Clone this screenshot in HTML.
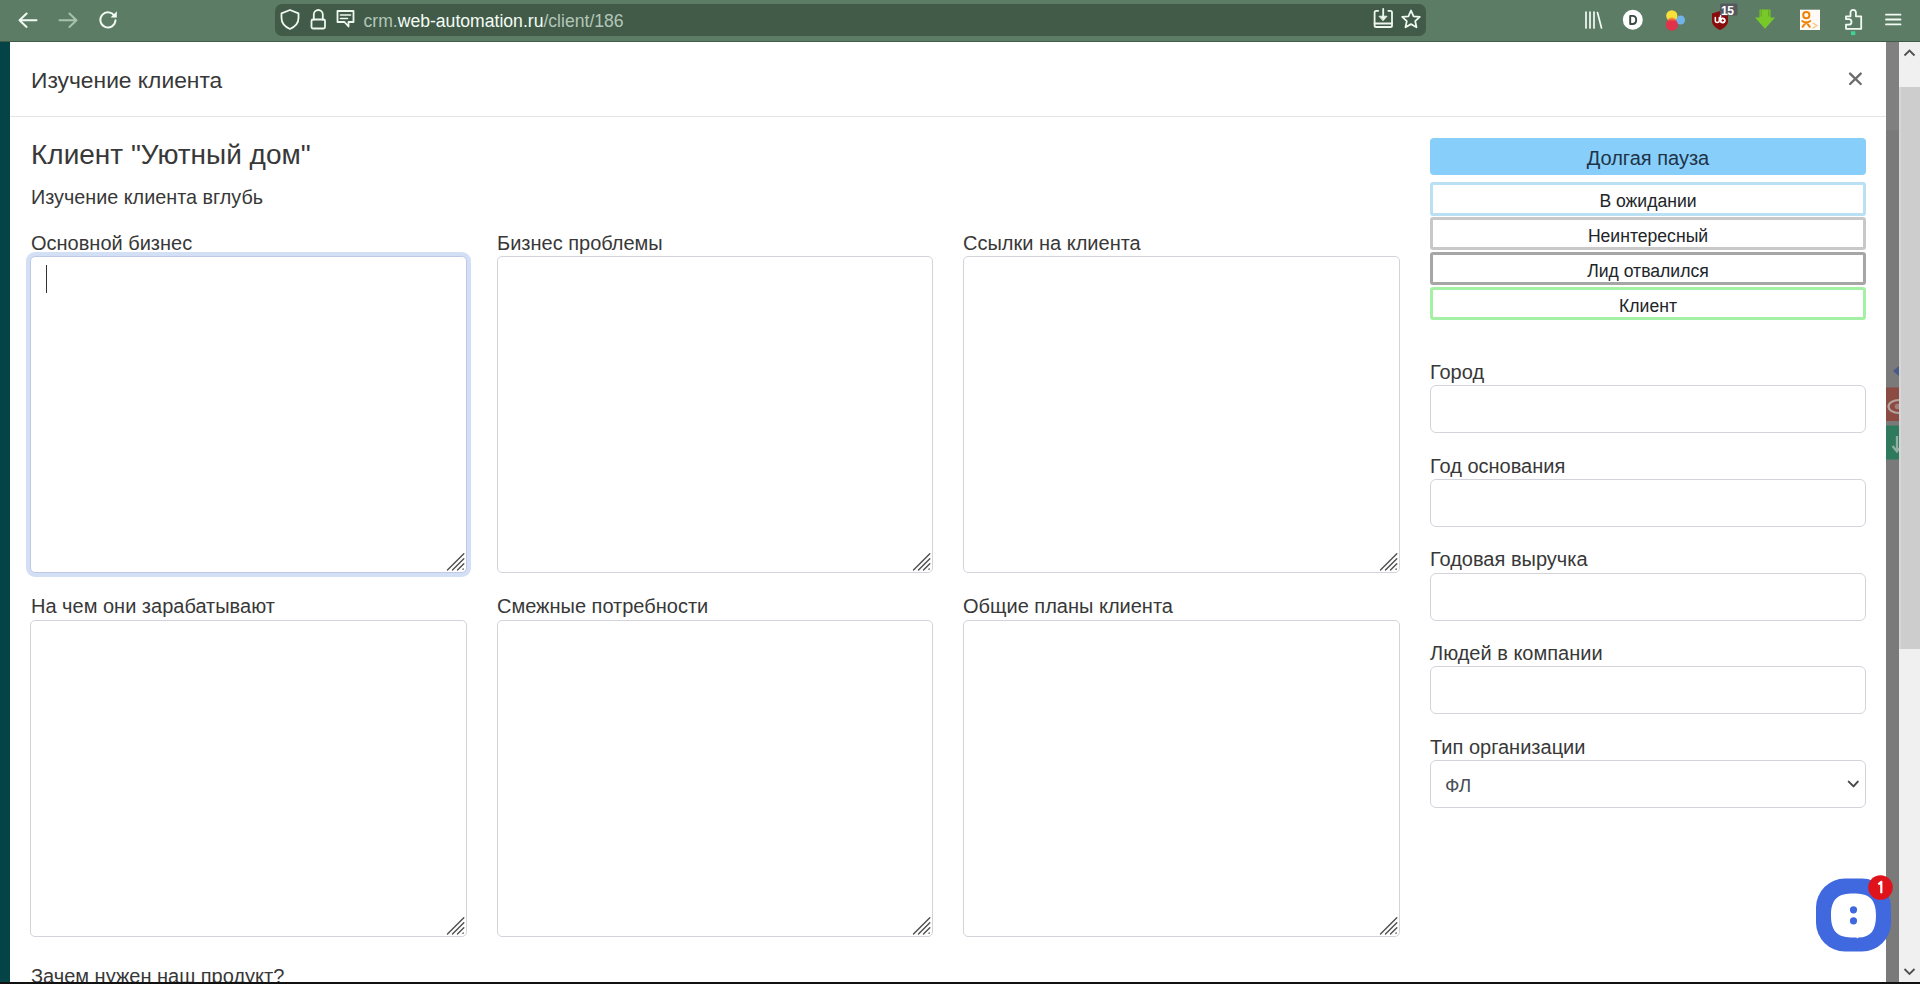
<!DOCTYPE html>
<html><head><meta charset="utf-8">
<style>
*{box-sizing:border-box;margin:0;padding:0}
html,body{width:1920px;height:984px;overflow:hidden;background:#fff;font-family:"Liberation Sans",sans-serif;color:#383838}
.a{position:absolute}
#tb{left:0;top:0;width:1920px;height:42px;background:#5c7c66;border-bottom:1px solid #3f5a47}
#url{left:275px;top:3.5px;width:1151px;height:32px;background:#425b49;border-radius:7px}
#urltxt{left:363.5px;top:10.5px;font-size:17.6px;line-height:20px;white-space:nowrap;color:#b3c6b8}
#urltxt b{font-weight:normal;color:#f4fbf5}
#strip{left:0;top:42px;width:10px;height:940px;background:#044446}
#modal{left:10px;top:42px;width:1876px;height:940px;background:#fff}
#gray{left:1886px;top:42px;width:13px;height:940px;background:linear-gradient(#808080 0,#808080 88px,#7a7a7a 88px)}
#sb{left:1899px;top:42px;width:21px;height:940px;background:#f0f0f0}
#thumb{left:1899px;top:87px;width:21px;height:562px;background:#cdcdcd;border-left:2px solid #d6d6d6}
#blk{left:0;top:982px;width:1920px;height:2px;background:#111}
#hdrline{left:10px;top:116px;width:1876px;height:1px;background:#e5e5e5}
.t{position:absolute;white-space:nowrap;line-height:1}
.ta{position:absolute;border:1px solid #d4d3db;border-radius:5px;background:#fff}
.inp{position:absolute;left:1430px;width:436px;height:48px;border:1px solid #d4d3db;border-radius:6px;background:#fff}
.btn{position:absolute;left:1430px;width:436px;height:33px;border:3px solid #ccc;border-radius:3px;background:#fff;font-size:17.6px;text-align:center;line-height:32px;color:#212529}
</style></head><body>
<div id="tb" class="a"></div>
<div id="url" class="a"></div>
<div id="urltxt" class="a">crm.<b>web-automation.ru</b>/client/186</div>

<!-- toolbar icons -->
<svg class="a" style="left:0;top:0" width="1920" height="42" viewBox="0 0 1920 42" fill="none" stroke-linecap="round" stroke-linejoin="round">
 <g stroke="#f2fbf3" stroke-width="2">
  <path d="M19.5 20.2H36.5M26.6 13.5L19.5 20.2L26.6 26.9"/>
 </g>
 <g stroke="#a9c2b0" stroke-width="2">
  <path d="M59.5 20.2H76.5M69.4 13.5L76.5 20.2L69.4 26.9"/>
 </g>
 <path d="M114.6 16.3A7.6 7.6 0 1 0 115.5 20.3" stroke="#f2fbf3" stroke-width="1.9"/>
 <path d="M116.8 11.3V17.6H110.6Z" fill="#f2fbf3"/>
 <!-- shield -->
 <path d="M290 10L298.5 13.3V18C298.5 23.5 294.5 27 290 29C285.5 27 281.5 23.5 281.5 18V13.3Z" stroke="#eef8ef" stroke-width="1.8"/>
 <!-- lock -->
 <rect x="311.5" y="19.5" width="13.5" height="9" rx="1.5" stroke="#eef8ef" stroke-width="1.8"/>
 <path d="M313.8 19.5V14.5A4.5 4.5 0 0 1 322.8 14.5V19.5" stroke="#eef8ef" stroke-width="1.8"/>
 <!-- chat -->
 <path d="M337.5 11H353.5V22H348.5L348.5 26.5L344.5 22H337.5Z" stroke="#eef8ef" stroke-width="1.8"/>
 <path d="M340.5 15H350.5M340.5 18.5H347.5" stroke="#eef8ef" stroke-width="1.6"/>
 <!-- save to pocket/download -->
 <path d="M1378.2 10.8H1376.2Q1374.6 10.8 1374.6 12.4V25.4Q1374.6 27 1376.2 27H1390.4Q1392 27 1392 25.4V12.4Q1392 10.8 1390.4 10.8H1388.3" stroke="#eef8ef" stroke-width="1.8"/>
 <path d="M1374.6 23.5H1392" stroke="#eef8ef" stroke-width="1.8"/>
 <path d="M1383.2 9V17" stroke="#eef8ef" stroke-width="1.8"/><path d="M1379.3 16.2H1387.1L1383.2 20.6Z" fill="#eef8ef" stroke="#eef8ef" stroke-width="0.8"/>
 <!-- star -->
 <path d="M1411 10.5L1413.6 16.3L1419.8 16.9L1415.2 21.1L1416.5 27.3L1411 24.1L1405.5 27.3L1406.8 21.1L1402.2 16.9L1408.4 16.3Z" stroke="#eef8ef" stroke-width="1.8"/>
 <!-- library -->
 <path d="M1586 12V28M1590 12V28M1594 12V28M1597.5 12.5L1601.5 28" stroke="#f2fbf3" stroke-width="1.7"/>
 <!-- D circle -->
 <circle cx="1632.8" cy="19.7" r="10" fill="#fff"/>
 <path d="M1630.2 15.9H1632.3C1635 15.9 1636.2 17.8 1636.2 20C1636.2 22.2 1635 24 1632.3 24H1630.2Z" stroke="#3a4a40" stroke-width="1.9"/>
 <!-- colorful -->
 <circle cx="1680.5" cy="20" r="4.6" fill="#6fb3ea"/>
 <circle cx="1671.8" cy="15.8" r="5.6" fill="#f8e23a"/>
 <circle cx="1671.8" cy="24.8" r="6" fill="#e2314a"/>
 <path d="M1666.8 20.5A5.6 5.6 0 0 1 1676.8 20.5" fill="#f07a3a" opacity="0.7"/>
 <!-- ublock -->
 <path d="M1712 13.5L1720 11L1728 13.5V21C1728 25 1724.5 28 1720 30C1715.5 28 1712 25 1712 21Z" fill="#8a0d0d"/>
 <path d="M1715.3 17.5V20.5A2 2 0 0 0 1719.3 20.5V17.5M1720.6 15.5V20.5A2.1 2.1 0 1 0 1720.6 20.4" stroke="#fff" stroke-width="1.5"/><circle cx="1722.7" cy="20.5" r="2.1" stroke="#fff" stroke-width="1.5"/>
 <rect x="1720" y="3.5" width="17.5" height="12" rx="1.5" fill="#55585e"/>
 <!-- green arrow -->
 <path d="M1759.5 9.5H1770.5V17.5H1775L1765 28.8L1755 17.5H1759.5Z" fill="#79c82a"/>
 <path d="M1761.2 10V16M1768.8 10V16" stroke="#5ea21e" stroke-width="0.9"/>
 <!-- OK -->
 <rect x="1800" y="9.7" width="20" height="20.3" fill="#fffaf5"/>
 <circle cx="1806.3" cy="15.2" r="3.1" stroke="#ee8208" stroke-width="2"/>
 <path d="M1802.2 21C1804.5 22.6 1808 22.6 1810.3 21M1806.2 22.2L1802.6 26.8M1806.2 22.2L1809.8 26.8" stroke="#ee8208" stroke-width="2"/>
 <path d="M1813 23.2L1817 25.6L1813 28" stroke="#f5c27a" stroke-width="1.2"/>
 <!-- puzzle -->
 <path d="M1850.5 15.5V12.5A2.7 2.7 0 0 1 1855.9 12.5V16.3H1861.2V28.8H1846V24.6H1848.8A2.7 2.7 0 0 0 1848.8 19.2H1846V16.3H1850.5" stroke="#f2fbf3" stroke-width="1.8"/>
 <rect x="1851" y="31.3" width="4.3" height="3.8" fill="#3fd39a"/>
 <!-- hamburger -->
 <path d="M1886 14.7H1900.5M1886 19.5H1900.5M1886 24.4H1900.5" stroke="#f2fbf3" stroke-width="1.8"/>
</svg>
<div class="t" style="left:1721px;top:4.5px;font-size:12px;font-weight:bold;color:#fff;letter-spacing:-0.5px">15</div>
<div id="strip" class="a"></div>
<div id="modal" class="a"></div>
<div id="gray" class="a"></div>
<div id="sb" class="a"></div>
<div id="thumb" class="a"></div>
<div id="hdrline" class="a"></div>

<div class="t" style="left:31px;top:68.5px;font-size:22.8px">Изучение клиента</div>
<div class="t" style="left:31px;top:141px;font-size:28px">Клиент "Уютный дом"</div>
<div class="t" style="left:31px;top:188px;font-size:19.8px">Изучение клиента вглубь</div>

<div class="t" style="left:31px;top:233px;font-size:20px">Основной бизнес</div>
<div class="t" style="left:497px;top:233px;font-size:20px">Бизнес проблемы</div>
<div class="t" style="left:963px;top:233px;font-size:20px">Ссылки на клиента</div>
<div class="ta" style="left:30px;top:256px;width:437px;height:317px;border-color:#bfc8e6;box-shadow:0 0 0 4px #d3dff5"></div>
<div class="ta" style="left:497px;top:256px;width:436px;height:317px"></div>
<div class="ta" style="left:963px;top:256px;width:437px;height:317px"></div>

<div class="t" style="left:31px;top:596px;font-size:20px">На чем они зарабатывают</div>
<div class="t" style="left:497px;top:596px;font-size:20px">Смежные потребности</div>
<div class="t" style="left:963px;top:596px;font-size:20px">Общие планы клиента</div>
<div class="ta" style="left:30px;top:620px;width:437px;height:317px"></div>
<div class="ta" style="left:497px;top:620px;width:436px;height:317px"></div>
<div class="ta" style="left:963px;top:620px;width:437px;height:317px"></div>

<div class="t" style="left:31px;top:966px;font-size:20px">Зачем нужен наш продукт?</div>

<div class="a" style="left:1430px;top:138px;width:436px;height:37px;background:#87cefa;border-radius:4px;font-size:20px;text-align:center;line-height:41px;color:#1f3347">Долгая пауза</div>
<div class="btn" style="top:182px;height:34px;border-color:#b9e0f3">В ожидании</div>
<div class="btn" style="top:217px;border-color:#c8c8c8">Неинтересный</div>
<div class="btn" style="top:252px;border-color:#a6a6a6">Лид отвалился</div>
<div class="btn" style="top:287px;border-color:#a4f0a4">Клиент</div>

<div class="t" style="left:1430px;top:362px;font-size:20px">Город</div>
<div class="inp" style="top:385px"></div>
<div class="t" style="left:1430px;top:456px;font-size:20px">Год основания</div>
<div class="inp" style="top:479px"></div>
<div class="t" style="left:1430px;top:549px;font-size:20px">Годовая выручка</div>
<div class="inp" style="top:573px"></div>
<div class="t" style="left:1430px;top:643px;font-size:20px">Людей в компании</div>
<div class="inp" style="top:666px"></div>
<div class="t" style="left:1430px;top:737px;font-size:20px">Тип организации</div>
<div class="inp" style="top:760px"></div>
<div class="t" style="left:1445px;top:776px;font-size:19px;color:#495057">ФЛ</div>


<svg class="a" style="left:446px;top:552px" width="20" height="20" viewBox="0 0 20 20" stroke="#4f4f4f" stroke-width="1.4" stroke-linecap="round"><path d="M1.5 18L17.8 1.7M6.5 18L17.8 6.7M11.5 18L17.8 11.7M17 17.2L17.2 17"/></svg><svg class="a" style="left:446px;top:916px" width="20" height="20" viewBox="0 0 20 20" stroke="#4f4f4f" stroke-width="1.4" stroke-linecap="round"><path d="M1.5 18L17.8 1.7M6.5 18L17.8 6.7M11.5 18L17.8 11.7M17 17.2L17.2 17"/></svg><svg class="a" style="left:912px;top:552px" width="20" height="20" viewBox="0 0 20 20" stroke="#4f4f4f" stroke-width="1.4" stroke-linecap="round"><path d="M1.5 18L17.8 1.7M6.5 18L17.8 6.7M11.5 18L17.8 11.7M17 17.2L17.2 17"/></svg><svg class="a" style="left:912px;top:916px" width="20" height="20" viewBox="0 0 20 20" stroke="#4f4f4f" stroke-width="1.4" stroke-linecap="round"><path d="M1.5 18L17.8 1.7M6.5 18L17.8 6.7M11.5 18L17.8 11.7M17 17.2L17.2 17"/></svg><svg class="a" style="left:1379px;top:552px" width="20" height="20" viewBox="0 0 20 20" stroke="#4f4f4f" stroke-width="1.4" stroke-linecap="round"><path d="M1.5 18L17.8 1.7M6.5 18L17.8 6.7M11.5 18L17.8 11.7M17 17.2L17.2 17"/></svg><svg class="a" style="left:1379px;top:916px" width="20" height="20" viewBox="0 0 20 20" stroke="#4f4f4f" stroke-width="1.4" stroke-linecap="round"><path d="M1.5 18L17.8 1.7M6.5 18L17.8 6.7M11.5 18L17.8 11.7M17 17.2L17.2 17"/></svg>
<svg class="a" style="left:1840px;top:64px" width="30" height="30" viewBox="0 0 30 30" stroke="#6c6c6c" stroke-width="2.4" stroke-linecap="round"><path d="M10.1 9.6L20.7 20M20.7 9.6L10.1 20"/></svg>
<div class="a" style="left:46px;top:265px;width:1px;height:28px;background:#333"></div>
<svg class="a" style="left:1844px;top:776px" width="16" height="16" viewBox="0 0 16 16" fill="none" stroke="#4a4a4a" stroke-width="2" stroke-linecap="round" stroke-linejoin="round"><path d="M4.7 5.6L9.5 10.4L13.8 5.6"/></svg>
<svg class="a" style="left:1899px;top:42px" width="21" height="21" viewBox="0 0 21 21" fill="none" stroke="#505050" stroke-width="1.8"><path d="M5.5 13.5L10.5 8.5L15.5 13.5"/></svg>
<svg class="a" style="left:1899px;top:961px" width="21" height="21" viewBox="0 0 21 21" fill="none" stroke="#505050" stroke-width="1.8"><path d="M5.5 8L10.5 13L15.5 8"/></svg>
<!-- side strip items (behind backdrop) -->
<svg class="a" style="left:1886px;top:360px" width="13" height="110" viewBox="0 0 13 110">
 <path d="M13 6L7 11L13 16Z" fill="#4b5a86"/>
 <rect x="0" y="27.5" width="13" height="33.5" fill="#8b4a42"/>
 <ellipse cx="13" cy="46.5" rx="10.5" ry="6.5" fill="none" stroke="#b3a49e" stroke-width="2.2"/><circle cx="11.5" cy="46.5" r="2.8" fill="#a3807a"/>
 <rect x="0" y="65.5" width="13" height="34" fill="#2f7a5c"/>
 <path d="M11 76V91M6.5 86L11 91.5L15.5 86" fill="none" stroke="#8fb0a2" stroke-width="2.3"/>
</svg>
<!-- chat widget -->
<svg class="a" style="left:1810px;top:870px" width="90" height="90" viewBox="0 0 90 90">
 <rect x="6" y="8.5" width="75" height="73" rx="29" fill="#4068df"/>
 <path d="M43.5 23.5C58 23.5 66 28 66 45.5C66 60 61 67.5 48.5 67.5L47 68.5L46.5 67.5H43.5C29 67.5 21 63 21 45.5C21 28 29 23.5 43.5 23.5Z" fill="#fff"/>
 <circle cx="43.5" cy="39.8" r="3.6" fill="#3f68df"/>
 <circle cx="43.5" cy="50.8" r="3.6" fill="#3f68df"/>
 <circle cx="70.5" cy="17.5" r="12.3" fill="#e0131a"/>
 <path d="M68.3 14.3L71.3 11.8V23.3" fill="none" stroke="#fff" stroke-width="2.2" stroke-linejoin="round"/>
</svg>
<div id="blk" class="a"></div>
</body></html>
